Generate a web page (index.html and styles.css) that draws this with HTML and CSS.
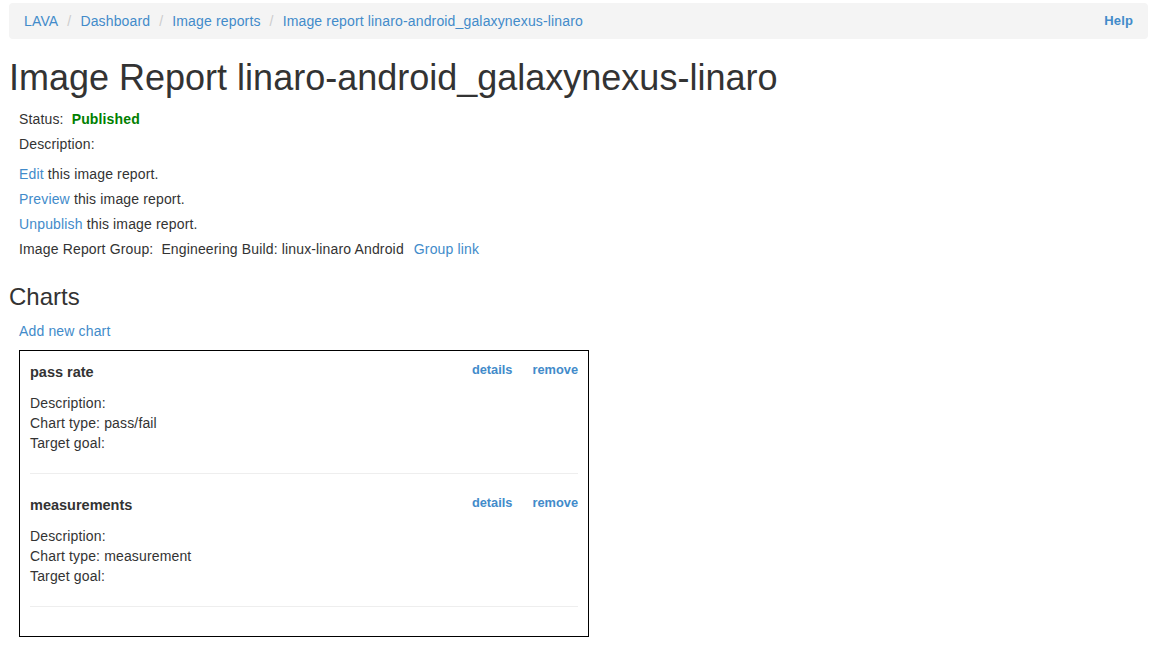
FILE: index.html
```html
<!DOCTYPE html>
<html>
<head>
<meta charset="utf-8">
<title>Image Report linaro-android_galaxynexus-linaro</title>
<link rel="stylesheet" href="styles.css">
</head>
<body>
<div class="page">
  <nav class="breadcrumb">
    <ol class="crumbs">
      <li><a href="#">LAVA</a></li>
      <li><a href="#">Dashboard</a></li>
      <li><a href="#">Image reports</a></li>
      <li><a href="#">Image report linaro-android_galaxynexus-linaro</a></li>
    </ol>
    <a class="help" href="#">Help</a>
  </nav>

  <h1 class="title">Image Report linaro-android_galaxynexus-linaro</h1>

  <div class="info">
    <div class="row">Status:<span class="published">Published</span></div>
    <div class="row">Description:</div>
    <div class="row gap"><a href="#">Edit</a> this image report.</div>
    <div class="row"><a href="#">Preview</a> this image report.</div>
    <div class="row"><a href="#">Unpublish</a> this image report.</div>
    <div class="row">Image Report Group:<span class="group">Engineering Build: linux-linaro Android</span><a class="group-link" href="#">Group link</a></div>
  </div>

  <h3 class="section">Charts</h3>
  <div class="add"><a href="#">Add new chart</a></div>

  <div class="charts">
    <div class="chart">
      <div class="chart-head">
        <span class="chart-name">pass rate</span>
        <span class="actions"><a href="#">details</a><a href="#">remove</a></span>
      </div>
      <div class="meta">Description:</div>
      <div class="meta">Chart type: pass/fail</div>
      <div class="meta">Target goal:</div>
      <hr class="sep">
    </div>
    <div class="chart">
      <div class="chart-head">
        <span class="chart-name">measurements</span>
        <span class="actions"><a href="#">details</a><a href="#">remove</a></span>
      </div>
      <div class="meta">Description:</div>
      <div class="meta">Chart type: measurement</div>
      <div class="meta">Target goal:</div>
      <hr class="sep">
    </div>
  </div>
</div>
</body>
</html>
```
FILE: styles.css
```css
html, body {
  margin: 0;
  padding: 0;
  background: #fff;
}
body {
  font-family: "Liberation Sans", Arial, Helvetica, sans-serif;
  font-size: 14px;
  line-height: 20px;
  color: #333;
  letter-spacing: 0.15px;
}
a {
  color: #428bca;
  text-decoration: none;
}
.page {
  padding: 3px 9px 0 9px;
}
.breadcrumb {
  display: flex;
  justify-content: space-between;
  align-items: center;
  background: #f4f4f4;
  border-radius: 4px;
  padding: 8px 15px;
  height: 20px;
}
.crumbs {
  list-style: none;
  margin: 0;
  padding: 0;
  display: flex;
}
.crumbs li + li::before {
  content: "/";
  color: #ccc;
  padding: 0 9px 0 5px;
  margin-left: 4px;
}
.help {
  font-weight: bold;
  font-size: 13px;
}
.title {
  font-size: 36px;
  font-weight: normal;
  line-height: 39.6px;
  margin: 19px 0 0 0;
  color: #333;
  letter-spacing: 0;
}
.info {
  padding-left: 10px;
  margin-top: 11px;
}
.row {
  height: 20px;
  margin-bottom: 5px;
}
.row.gap {
  margin-top: 10px;
}
.published {
  color: #008000;
  font-weight: bold;
  margin-left: 8px;
}
.group {
  margin-left: 8px;
}
.group-link {
  margin-left: 10px;
}
.section {
  font-size: 24px;
  font-weight: normal;
  line-height: 26.4px;
  margin: 25px 0 0 0;
  color: #333;
  letter-spacing: 0;
}
.add {
  padding-left: 10px;
  margin-top: 11px;
}
.charts {
  margin: 9px 0 0 10px;
  width: 548px;
  border: 1px solid #000;
  padding: 11px 10px 8px 10px;
}
.chart-head {
  display: flex;
  justify-content: space-between;
  align-items: flex-start;
  height: 20px;
  margin-bottom: 11px;
}
.chart-name {
  font-weight: bold;
  font-size: 14.5px;
  letter-spacing: 0;
}
.actions {
  display: flex;
  gap: 20px;
  font-size: 12.8px;
  font-weight: bold;
  line-height: 16px;
  letter-spacing: 0;
}
.meta {
  height: 20px;
}
.sep {
  border: 0;
  border-top: 1px solid #eee;
  margin: 20px 0 21px 0;
  height: 0;
}
```
